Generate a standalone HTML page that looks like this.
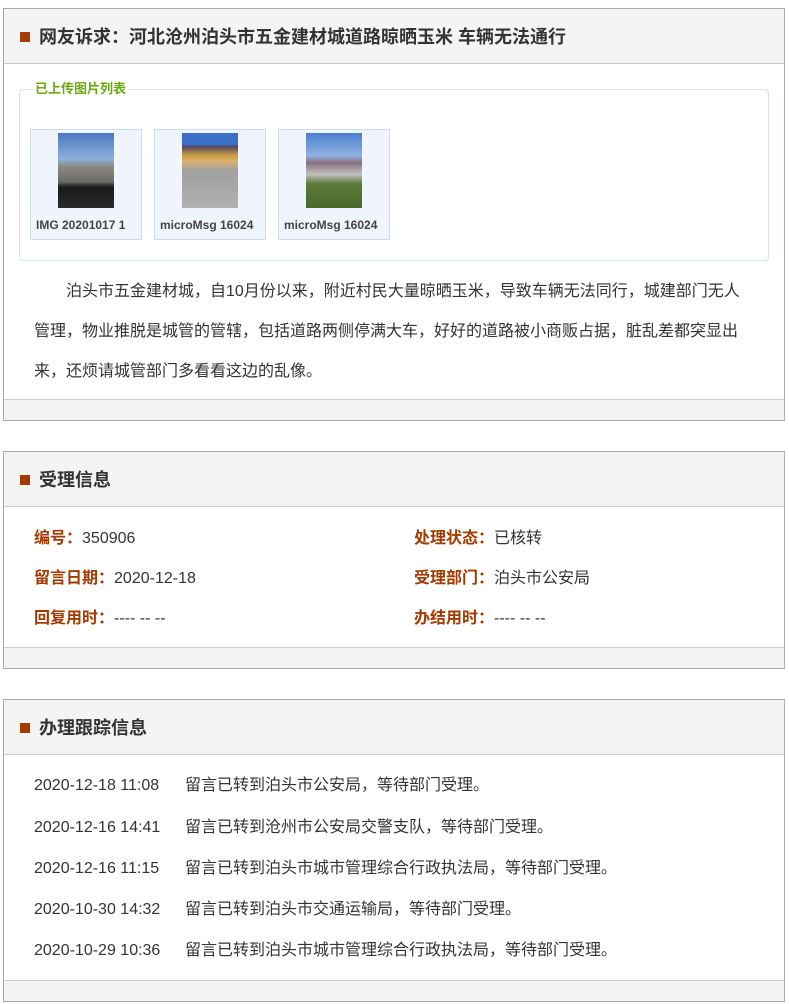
<!DOCTYPE html>
<html><head><meta charset="utf-8"><style>
body{margin:0;width:789px;height:1004px;background:#fff;font-family:"Liberation Sans","Noto Sans CJK SC",sans-serif;color:#333;position:relative;overflow:hidden}
.p{position:absolute;left:3px;width:780px;border:1px solid #aaa;background:#fff}
.h{position:absolute;left:0;top:0;right:0;height:54px;background:#f4f4f4;border-bottom:1px solid #ccc}
.h i{position:absolute;left:16px;top:23px;width:10px;height:10px;background:#a33a00}
.h b{position:absolute;left:35px;top:15px;font-size:18px;color:#333;line-height:26px}
.f{position:absolute;left:0;right:0;bottom:0;height:20px;background:#f4f4f4;border-top:1px solid #ccc}
.t{position:absolute;font-size:16px;line-height:20px;white-space:nowrap}
.l{color:#a33a00;font-weight:bold}
.d{display:inline-block;width:151px}
.fs{position:absolute;left:19px;top:89px;width:748px;height:170px;border:1px solid #d8e2f0;border-radius:4px}
.lg{position:absolute;left:33px;top:81px;background:#fff;padding:0 2px;color:#6aaa10;font-size:13px;font-weight:bold;line-height:16px}
.im{position:absolute;top:129px;width:110px;height:109px;border:1px solid #cddcec;background:#f0f5fd}
.im div{position:absolute;left:27px;top:3px;width:56px;height:75px}
.im span{position:absolute;left:5px;top:88px;width:100px;overflow:hidden;font-size:12px;font-weight:bold;color:#444;white-space:nowrap}
</style></head><body>
<div class="p" style="top:8px;height:411px"><div class="h"><i></i><b>网友诉求：河北沧州泊头市五金建材城道路晾晒玉米 车辆无法通行</b></div><div class="f"></div></div>
<div class="fs"></div><div class="lg">已上传图片列表</div>
<div class="im" style="left:30px"><div style="background:linear-gradient(#4a78c0 0,#90b0d8 35%,#8a8a80 45%,#6a6a6a 65%,#1a1a1a 72%,#2a2a2a 100%)"></div><span>IMG 20201017 1</span></div>
<div class="im" style="left:154px"><div style="background:linear-gradient(#3a70c8 0,#3a70c8 15%,#554466 18%,#c8a040 30%,#d8b070 38%,#a0a0a0 50%,#b0b0b0 100%)"></div><span>microMsg 16024</span></div>
<div class="im" style="left:278px"><div style="background:linear-gradient(#4a80d0 0,#90b0e0 30%,#887080 40%,#c0c0c0 55%,#5a7a3a 68%,#4a6a2a 100%)"></div><span>microMsg 16024</span></div>
<div class="t" style="left:34px;top:272px;width:720px;white-space:normal;line-height:40px;text-indent:32px">泊头市五金建材城，自10月份以来，附近村民大量晾晒玉米，导致车辆无法同行，城建部门无人管理，物业推脱是城管的管辖，包括道路两侧停满大车，好好的道路被小商贩占据，脏乱差都突显出来，还烦请城管部门多看看这边的乱像。</div>

<div class="p" style="top:451px;height:216px"><div class="h"><i></i><b>受理信息</b></div><div class="f"></div></div>
<div class="t" style="left:34px;top:529px"><span class="l">编号：</span>350906</div>
<div class="t" style="left:34px;top:569px"><span class="l">留言日期：</span>2020-12-18</div>
<div class="t" style="left:34px;top:609px"><span class="l">回复用时：</span>---- -- --</div>
<div class="t" style="left:414px;top:529px"><span class="l">处理状态：</span>已核转</div>
<div class="t" style="left:414px;top:569px"><span class="l">受理部门：</span>泊头市公安局</div>
<div class="t" style="left:414px;top:609px"><span class="l">办结用时：</span>---- -- --</div>

<div class="p" style="top:699px;height:301px"><div class="h"><i></i><b>办理跟踪信息</b></div><div class="f"></div></div>
<div class="t" style="left:34px;top:776px"><span class="d">2020-12-18 11:08</span>留言已转到泊头市公安局，等待部门受理。</div>
<div class="t" style="left:34px;top:818px"><span class="d">2020-12-16 14:41</span>留言已转到沧州市公安局交警支队，等待部门受理。</div>
<div class="t" style="left:34px;top:859px"><span class="d">2020-12-16 11:15</span>留言已转到泊头市城市管理综合行政执法局，等待部门受理。</div>
<div class="t" style="left:34px;top:900px"><span class="d">2020-10-30 14:32</span>留言已转到泊头市交通运输局，等待部门受理。</div>
<div class="t" style="left:34px;top:941px"><span class="d">2020-10-29 10:36</span>留言已转到泊头市城市管理综合行政执法局，等待部门受理。</div>
</body></html>
